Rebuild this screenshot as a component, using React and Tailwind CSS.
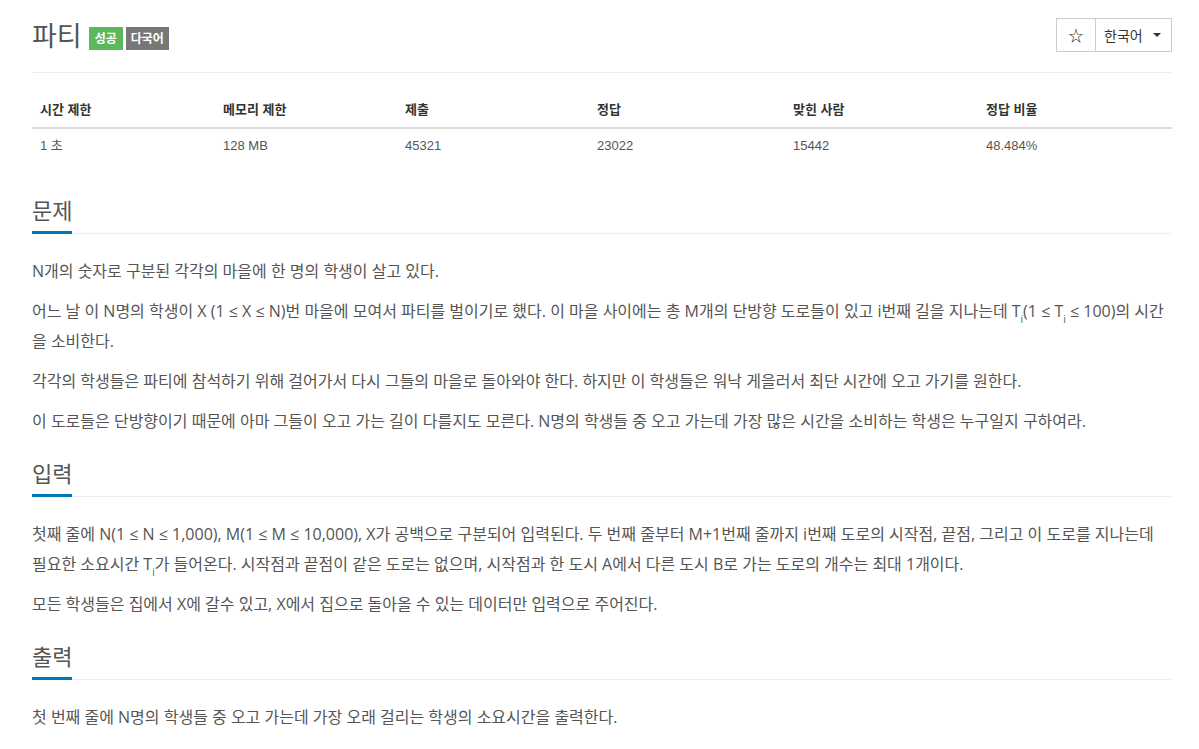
import { useState } from 'react'

const KR = { fontFamily: '"Open Sans", "Noto Sans CJK KR", sans-serif' }

const stats = [
  { label: '시간 제한', value: '1 초', w: 'w-[183px]' },
  { label: '메모리 제한', value: '128 MB', w: 'w-[182px]' },
  { label: '제출', value: '45321', w: 'w-[192px]' },
  { label: '정답', value: '23022', w: 'w-[196px]' },
  { label: '맞힌 사람', value: '15442', w: 'w-[193px]' },
  { label: '정답 비율', value: '48.484%', w: '' },
]

function Headline({ children }) {
  return (
    <div className="flex items-end border-b border-dotted border-[#ddd] mb-[22px]">
      <h2 className="w-[40px] whitespace-nowrap border-b-[3px] border-[#0076c0] pb-[6px] -mb-px text-[22px] leading-[30px] text-[#555] font-normal">
        {children}
      </h2>
    </div>
  )
}

function Sub({ children }) {
  return <sub className="text-[10px] leading-none align-[-3px]">{children}</sub>
}

export default function App() {
  const [starred, setStarred] = useState(false)

  return (
    <div className="bg-white min-h-screen pl-[32px] pr-[27px] text-[#555]" style={KR}>
      {/* Title */}
      <div className="flex items-start justify-between pt-[18px] pb-[20px] border-b border-[#eee]">
        <div className="flex items-center gap-[3px] pt-[2px]">
          <h1 className="text-[27px] leading-[32px] text-[#555] font-normal mr-[4px]">파티</h1>
          <span className="mt-[4px] bg-[#5cb85c] text-white text-[12px] font-bold px-[6px] h-[23px] leading-[23px]">성공</span>
          <span className="mt-[4px] bg-[#777] text-white text-[12px] font-bold px-[5px] h-[23px] leading-[23px]">다국어</span>
        </div>
        <div className="flex border border-[#ccc] h-[34px] text-[14px] text-[#333]">
          <button
            onClick={() => setStarred(!starred)}
            className="w-[39px] flex items-center justify-center border-r border-[#ccc] text-[15px]"
          >
            {starred ? '★' : '☆'}
          </button>
          <button className="w-[75px] flex items-center pl-[8px] gap-[10px]">
            한국어
            <span className="w-0 h-0 border-l-[4px] border-r-[4px] border-t-[4px] border-l-transparent border-r-transparent border-t-[#333]" />
          </button>
        </div>
      </div>

      {/* Stats table */}
      <table className="w-full mt-[20px] mb-[32px] text-[13px]" style={{ fontFamily: '"Liberation Sans", "Noto Sans CJK KR", sans-serif' }}>
        <thead>
          <tr className="border-b-2 border-[#ddd]">
            {stats.map((s) => (
              <th key={s.label} className={`${s.w} text-left font-bold text-[#333] px-[8px] pt-[8px] pb-[8px] leading-[18px]`}>
                {s.label}
              </th>
            ))}
          </tr>
        </thead>
        <tbody>
          <tr>
            {stats.map((s) => (
              <td key={s.label} className="px-[8px] pt-[8px] pb-[8px] leading-[18px] text-[#555]">{s.value}</td>
            ))}
          </tr>
        </tbody>
      </table>

      {/* 문제 */}
      <section className="mb-[22px]">
        <Headline>문제</Headline>
        <div className="text-[16px] leading-[30px] space-y-[10px]">
          <p>N개의 숫자로 구분된 각각의 마을에 한 명의 학생이 살고 있다.</p>
          <p>
            어느 날 이 N명의 학생이 X (1 ≤ X ≤ N)번 마을에 모여서 파티를 벌이기로 했다. 이 마을 사이에는 총 M개의 단방향 도로들이 있고 i번째 길을 지나는데 T<Sub>i</Sub>(1 ≤ T<Sub>i</Sub> ≤ 100)의 시간을 소비한다.
          </p>
          <p>각각의 학생들은 파티에 참석하기 위해 걸어가서 다시 그들의 마을로 돌아와야 한다. 하지만 이 학생들은 워낙 게을러서 최단 시간에 오고 가기를 원한다.</p>
          <p>이 도로들은 단방향이기 때문에 아마 그들이 오고 가는 길이 다를지도 모른다. N명의 학생들 중 오고 가는데 가장 많은 시간을 소비하는 학생은 누구일지 구하여라.</p>
        </div>
      </section>

      {/* 입력 */}
      <section className="mb-[22px]">
        <Headline>입력</Headline>
        <div className="text-[16px] leading-[30px] space-y-[10px]">
          <p>
            첫째 줄에 N(1 ≤ N ≤ 1,000), M(1 ≤ M ≤ 10,000), X가 공백으로 구분되어 입력된다. 두 번째 줄부터 M+1번째 줄까지 i번째 도로의 시작점, 끝점, 그리고 이 도로를 지나는데 필요한 소요시간 T<Sub>i</Sub>가 들어온다. 시작점과 끝점이 같은 도로는 없으며, 시작점과 한 도시 A에서 다른 도시 B로 가는 도로의 개수는 최대 1개이다.
          </p>
          <p>모든 학생들은 집에서 X에 갈수 있고, X에서 집으로 돌아올 수 있는 데이터만 입력으로 주어진다.</p>
        </div>
      </section>

      {/* 출력 */}
      <section>
        <Headline>출력</Headline>
        <div className="text-[16px] leading-[30px] space-y-[10px]">
          <p>첫 번째 줄에 N명의 학생들 중 오고 가는데 가장 오래 걸리는 학생의 소요시간을 출력한다.</p>
        </div>
      </section>
    </div>
  )
}
